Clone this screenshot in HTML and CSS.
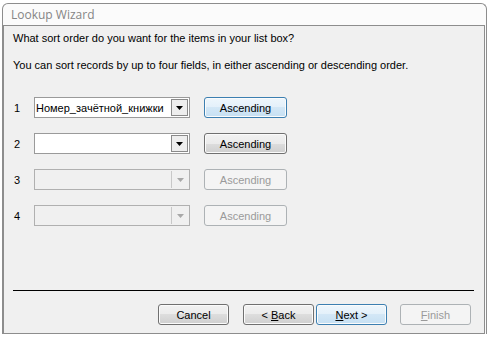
FILE: index.html
```html
<!DOCTYPE html>
<html lang="en">
<head>
    <meta charset="UTF-8">
    <title>Lookup Wizard</title>
    <link rel="stylesheet" href="styles.css">
</head>
<body>
    <div class="window">
        <div class="titlebar">Lookup Wizard</div>
        <div class="client">
            <p class="question">What sort order do you want for the items in your list box?</p>
            <p class="hint">You can sort records by up to four fields, in either ascending or descending order.</p>

            <div class="sort-rows">
                <div class="sort-row">
                    <span class="num">1</span>
                    <div class="combo">
                        <span class="combo-text">Номер_зачётной_книжки</span>
                        <span class="combo-btn"><svg width="7" height="4" viewBox="0 0 7 4"><polygon points="0,0 7,0 3.5,4"/></svg></span>
                    </div>
                    <button class="btn focused">Ascending</button>
                </div>
                <div class="sort-row">
                    <span class="num">2</span>
                    <div class="combo">
                        <span class="combo-text"></span>
                        <span class="combo-btn"><svg width="7" height="4" viewBox="0 0 7 4"><polygon points="0,0 7,0 3.5,4"/></svg></span>
                    </div>
                    <button class="btn">Ascending</button>
                </div>
                <div class="sort-row">
                    <span class="num">3</span>
                    <div class="combo disabled">
                        <span class="combo-text"></span>
                        <span class="combo-btn"><svg width="7" height="4" viewBox="0 0 7 4"><polygon points="0,0 7,0 3.5,4"/></svg></span>
                    </div>
                    <button class="btn" disabled>Ascending</button>
                </div>
                <div class="sort-row">
                    <span class="num">4</span>
                    <div class="combo disabled">
                        <span class="combo-text"></span>
                        <span class="combo-btn"><svg width="7" height="4" viewBox="0 0 7 4"><polygon points="0,0 7,0 3.5,4"/></svg></span>
                    </div>
                    <button class="btn" disabled>Ascending</button>
                </div>
            </div>

            <div class="separator"></div>

            <div class="footer">
                <button class="btn nav">Cancel</button>
                <button class="btn nav back">&lt; <u>B</u>ack</button>
                <button class="btn nav next focused"><u>N</u>ext &gt;</button>
                <button class="btn nav finish" disabled><u>F</u>inish</button>
            </div>
        </div>
    </div>
</body>
</html>
```

FILE: styles.css
```css
body {
    margin: 0;
    background: #ffffff;
    font-family: "Liberation Sans", Arial, sans-serif;
    font-size: 11px;
    color: #000;
}
.window {
    margin: 3px 0 0 2px;
    width: 483px;
    border: 1px solid #8d8d8d;
    border-bottom: none;
    border-radius: 6px 6px 0 0;
    background: #fbfbfb;
}
.titlebar {
    height: 21px;
    line-height: 21px;
    padding-left: 8px;
    font-family: "Open Sans", "Noto Sans", sans-serif;
    font-size: 12px;
    color: #858585;
}
.client {
    margin-right: 1px;
    border: 1px solid #8d8d8d;
    background: #f0f0f0;
    padding: 0 0 8px 9px;
}
.question,
.hint {
    margin: 0;
    line-height: 13px;
}
.question {
    padding-top: 6px;
}
.hint {
    margin-top: 14px;
}
.sort-rows {
    margin-top: 25px;
    display: flex;
    flex-direction: column;
    gap: 15px;
}
.sort-row {
    display: flex;
    align-items: center;
    height: 21px;
}
.num {
    width: 21px;
    padding-left: 1px;
    box-sizing: border-box;
}
.combo {
    width: 156px;
    height: 21px;
    box-sizing: border-box;
    border: 1px solid #9a9a9a;
    background: #fff;
    display: flex;
    align-items: center;
    margin-right: 14px;
}
.combo-text {
    flex: 1;
    padding-left: 1px;
    white-space: nowrap;
    overflow: hidden;
}
.combo-btn {
    width: 17px;
    height: 17px;
    margin-right: 1px;
    box-sizing: border-box;
    border: 1px solid #8a8a8a;
    background: #eeeeee;
    display: flex;
    align-items: center;
    justify-content: center;
}
.combo-btn svg {
    fill: #000;
}
.combo.disabled {
    border-color: #b0b0b0;
    background: #f0f0f0;
}
.combo.disabled .combo-btn {
    border: none;
    border-left: 1px solid #c8c8c8;
    background: transparent;
}
.combo.disabled .combo-btn svg {
    fill: #a8a8a8;
}
.btn {
    width: 83px;
    height: 21px;
    padding: 0;
    border: 1px solid #707070;
    border-radius: 3px;
    background: linear-gradient(#f2f2f2 0%, #ebebeb 50%, #dddddd 50%, #cfcfcf 100%);
    box-shadow: inset 0 0 0 1px #fbfbfb;
    font-family: "Liberation Sans", Arial, sans-serif;
    font-size: 11px;
    color: #000;
}
.btn.focused {
    border-color: #3c7fb1;
    background: linear-gradient(#eef6fc 0%, #e3f0fa 50%, #d3e7f6 50%, #c6e0f3 100%);
}
.btn:disabled {
    border-color: #adb2b5;
    background: #f4f4f4;
    box-shadow: none;
    color: #9a9a9a;
}
.btn u {
    text-decoration: underline;
}
.separator {
    margin-top: 64px;
    width: 461px;
    height: 1px;
    background: #000;
}
.footer {
    margin-top: 13px;
    display: flex;
    justify-content: flex-end;
    padding-right: 13px;
}
.btn.nav {
    width: 71px;
}
.btn.back {
    margin-left: 14px;
}
.btn.next {
    margin-left: 2px;
}
.btn.finish {
    margin-left: 13px;
}
```
